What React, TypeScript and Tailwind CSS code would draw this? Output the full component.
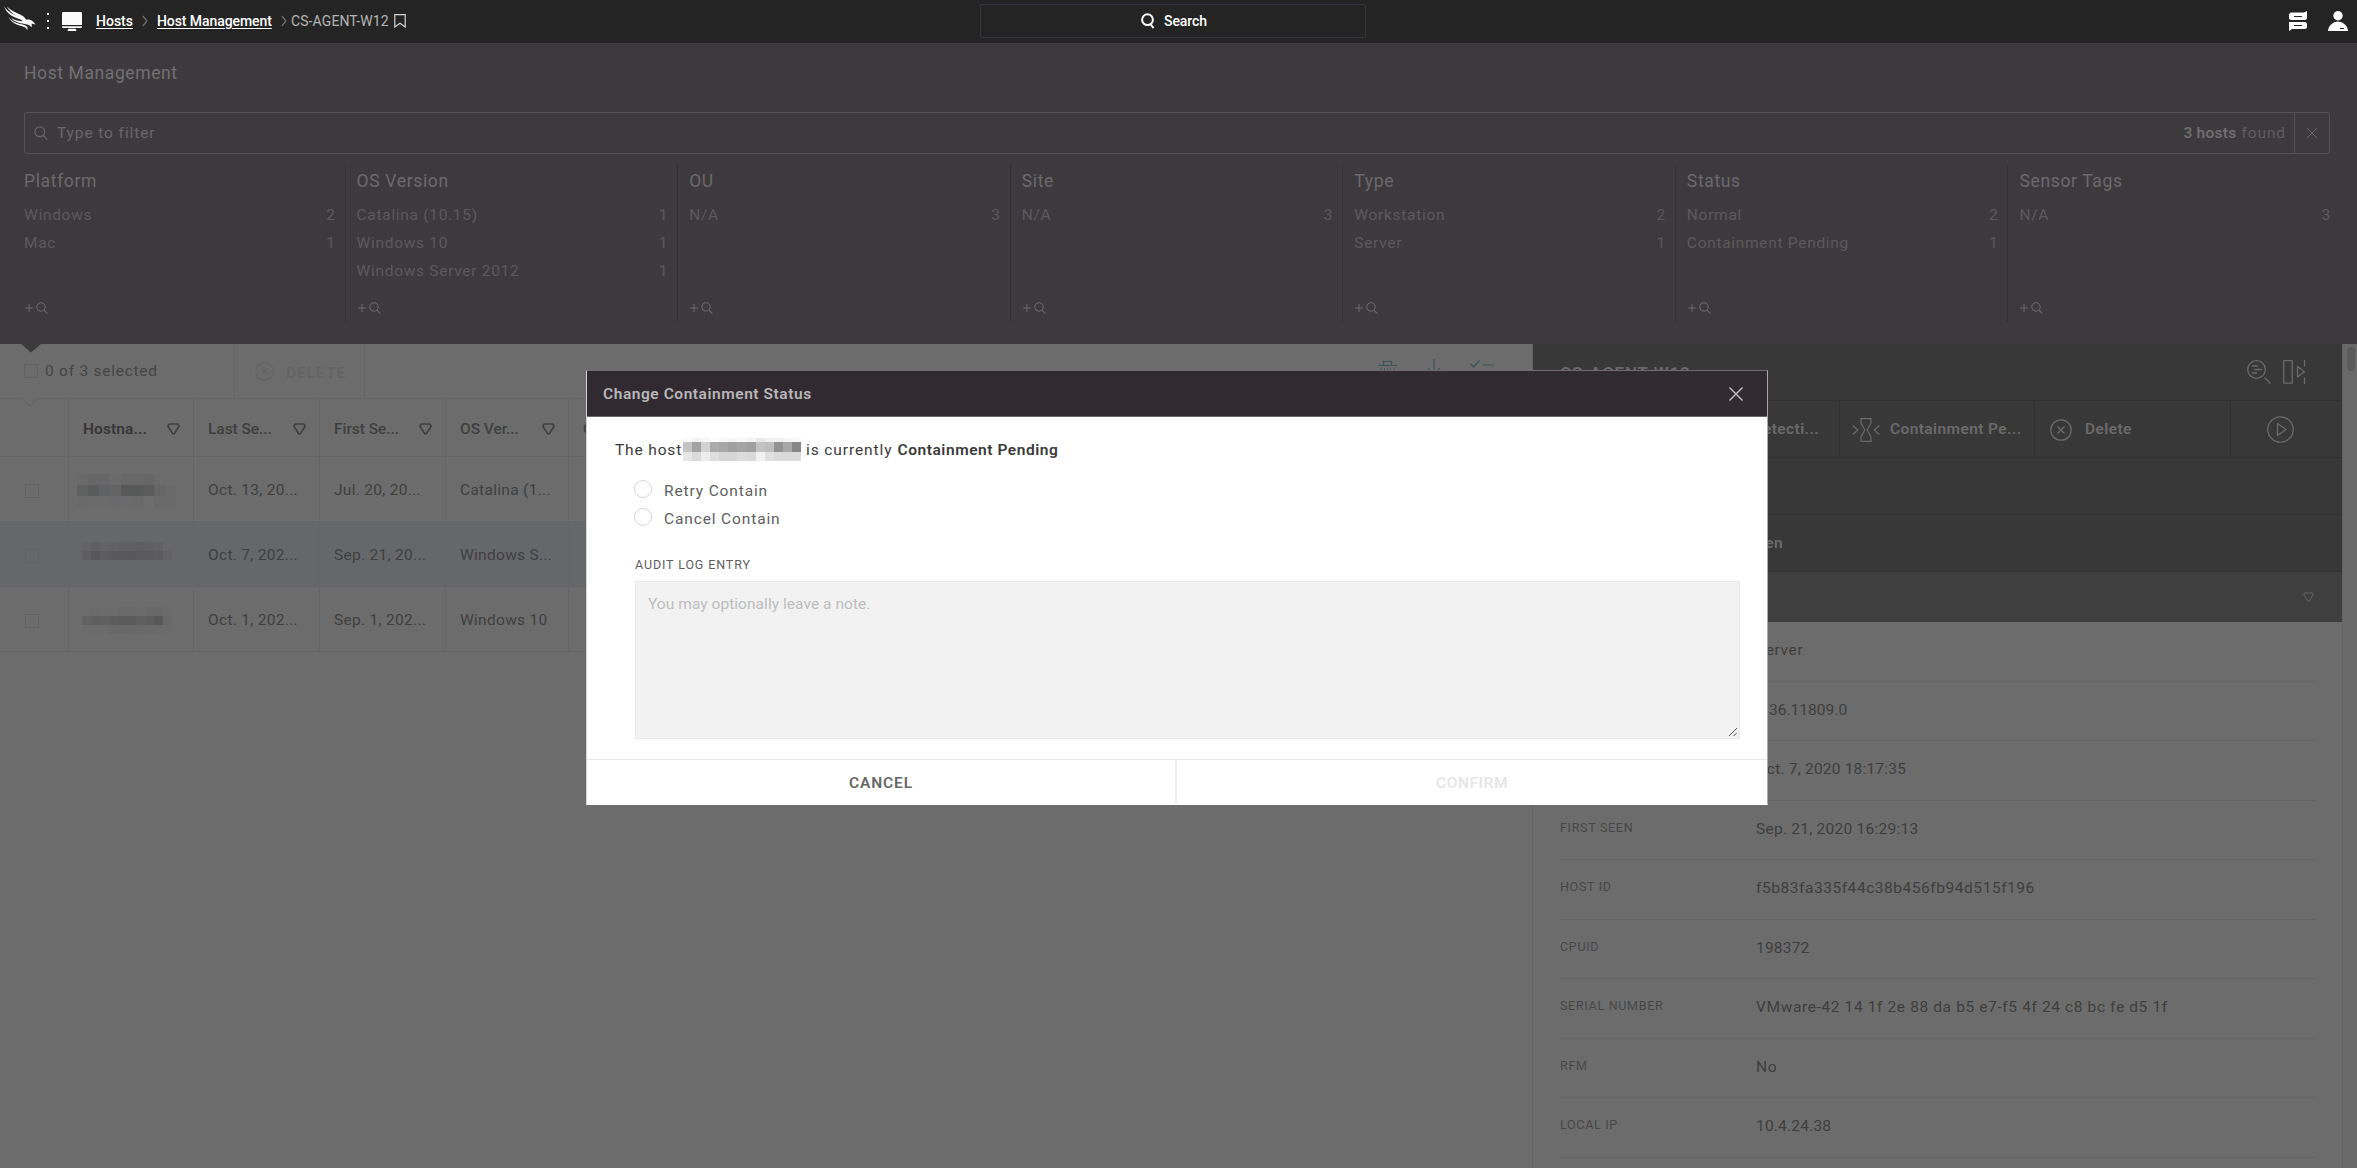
import type { ReactNode } from 'react';

type Facet = { title: string; rows: [string, number][] };

const facets: Facet[] = [
  { title: 'Platform', rows: [['Windows', 2], ['Mac', 1]] },
  { title: 'OS Version', rows: [['Catalina (10.15)', 1], ['Windows 10', 1], ['Windows Server 2012', 1]] },
  { title: 'OU', rows: [['N/A', 3]] },
  { title: 'Site', rows: [['N/A', 3]] },
  { title: 'Type', rows: [['Workstation', 2], ['Server', 1]] },
  { title: 'Status', rows: [['Normal', 2], ['Containment Pending', 1]] },
  { title: 'Sensor Tags', rows: [['N/A', 3]] },
];

const details: [string, string, string][] = [
  ['TYPE', 'Server', 'tracking-[0.6px]'],
  ['AGENT VERSION', '5.36.11809.0', 'tracking-[0.05px]'],
  ['LAST SEEN', 'Oct. 7, 2020 18:17:35', 'tracking-[0.2px]'],
  ['FIRST SEEN', 'Sep. 21, 2020 16:29:13', 'tracking-[0.25px]'],
  ['HOST ID', 'f5b83fa335f44c38b456fb94d515f196', 'tracking-[0.55px]'],
  ['CPUID', '198372', 'tracking-[0.2px]'],
  ['SERIAL NUMBER', 'VMware-42 14 1f 2e 88 da b5 e7-f5 4f 24 c8 bc fe d5 1f', 'tracking-[0.62px]'],
  ['RFM', 'No', 'tracking-[0.6px]'],
  ['LOCAL IP', '10.4.24.38', 'tracking-[0.2px]'],
];

function Magnifier({ className, width = 1.2 }: { className: string; width?: number }) {
  return (
    <svg viewBox="0 0 14 14" className={className} fill="none" stroke="currentColor" strokeWidth={width}>
      <circle cx="5.8" cy="5.8" r="4.9" />
      <path d="M9.2 9.4 13.3 13.6" />
    </svg>
  );
}

function Gem({ className }: { className: string }) {
  return (
    <svg viewBox="0 0 13 12" className={className} fill="none" stroke="currentColor" strokeWidth="1.6" strokeLinejoin="round">
      <path d="M2.200 1h8.600L12.100 3.200 7.200 10.800H5.800L.9 3.200z" />
    </svg>
  );
}

function Chevron() {
  return (
    <svg viewBox="0 0 6 12" className="h-3 w-1.5 text-[#6f6f6f]" fill="none" stroke="currentColor" strokeWidth="1.2">
      <path d="M.8 1 5 6 .8 11" />
    </svg>
  );
}

function CircleX({ className }: { className: string }) {
  return (
    <svg viewBox="0 0 22 22" className={className} fill="none" stroke="currentColor" strokeWidth="1.3">
      <circle cx="11" cy="11" r="10.2" />
      <path d="m7.5 7.5 7 7m0-7-7 7" />
    </svg>
  );
}

function TopBar() {
  return (
    <header className="grid h-[43px] grid-cols-[980px_386px_1fr] bg-[#242424] pb-px text-sm leading-[40px] text-white">
      <div className="flex items-center pl-1">
        <svg viewBox="0 0 32 25" className="-mt-1.5 h-[25px] w-8" fill="#fafafa">
          <path d="M0 0c2.600 4.600 7.500 7.500 12.500 9.700 3.500 1.500 5.800 2.700 7.200 4.600-4.600-1.300-9-2.500-12.500-4.900C3.200 6.700 1 3.600 0 0z" />
          <path d="M2.800 .4c4 4.200 9.600 6.200 14.200 8.500 2.600 1.300 4 2.700 5.200 4.900 2.300-.5 4.900 0 6.500 1.500.9.900 2.200 2.100 2.700 3.500-1.500-.9-2.900-1.200-4-.9.700 1 .6 2.200-.1 3.300-1.400-2.400-4.500-2.900-7.700-3.500C13.800 16.600 9.800 15.300 7 11.900c4 2.200 8.200 3.100 11.700 3.300C15 10.300 7.400 8.400 2.800.4z" />
          <path d="M4.300 11.100c2.600 3.200 6.500 5.700 11 6.700 3.400.8 6.800 1.200 8 3.200.5 1 .2 2.300-.2 3.200-.3-2-1.700-3-3.700-3.500-5-1.200-11.800-3.500-15.100-9.600z" />
        </svg>
        <div className="ml-[11px] flex flex-col gap-[5px]">
          <i className="size-0.5 bg-white" />
          <i className="size-0.5 bg-white" />
          <i className="size-0.5 bg-white" />
        </div>
        <svg viewBox="0 0 20 19" className="ml-[13px] h-[19px] w-5" fill="#fafafa">
          <path d="M1 0h18a1 1 0 0 1 1 1v12H0V1a1 1 0 0 1 1-1zM0 14.200h20v.8a1 1 0 0 1-1 1H1a1 1 0 0 1-1-1zM6.500 16.800h7l1.200 2.200H5.300z" />
        </svg>
        <a className="ml-3.5 w-[46px] font-medium underline underline-offset-2">Hosts</a>
        <Chevron />
        <a className="ml-[9px] w-[124px] font-medium tracking-[-0.08px] underline underline-offset-2">Host Management</a>
        <Chevron />
        <span className="ml-1 w-[103px] tracking-[0.1px] text-[#b5b5b5]">CS-AGENT-W12</span>
        <svg viewBox="0 0 12 14" className="h-3.5 w-3" fill="none" stroke="#d5d5d5" strokeWidth="1.2">
          <path d="M.8.7h10.400v12.300L6 9.300.8 13z" />
        </svg>
      </div>
      <div className="mt-1 flex h-[34px] items-center justify-center gap-[9px] rounded-[2px] border border-[#35343c] pl-0.5 font-medium">
        <svg viewBox="0 0 14 16" className="h-4 w-3.5" fill="none" stroke="#fff" strokeWidth="2">
          <circle cx="6.500" cy="6.700" r="5.400" />
          <path d="m9 10.500 3.600 4.600" />
        </svg>
        <span className="tracking-[-0.1px]">Search</span>
      </div>
      <div className="flex items-center justify-end gap-[21px] pr-[9px]">
        <svg viewBox="0 0 18 20" className="h-5 w-[18px]">
          <path fill="#fff" d="M2.500 1.500H15L18 0v6.500a2.500 2.500 0 0 1-2.500 2.500h-13A2.500 2.500 0 0 1 0 6.500V4a2.500 2.500 0 0 1 2.500-2.500zM0 11h15.500A2.500 2.500 0 0 1 18 13.500v2a2.500 2.500 0 0 1-2.500 2.500H3l-3 2z" />
          <path stroke="#242424" strokeWidth="1" d="M5 5.500h8M5 14.500h8" />
        </svg>
        <svg viewBox="0 0 20 20" className="size-5">
          <circle cx="10" cy="4.700" r="4.700" fill="#fff" />
          <path fill="#fff" d="M0 20c0-5 5-9.500 10-9.500S20 15 20 20z" />
          <path stroke="#242424" d="M12 17.500h4" />
        </svg>
      </div>
    </header>
  );
}

function FilterPanel() {
  return (
    <section className="h-[301px] bg-[#3d3a3e]">
      <h1 className="h-[69px] pl-6 text-[17.500px] leading-[61px] font-[450] tracking-[0.600px] text-[#717072]">Host Management</h1>
      <div className="mr-[27px] ml-6 flex h-[42px] items-center rounded-[3px] border border-[#545255] text-[15.500px] text-[#686669]">
        <Magnifier className="ml-[9px] size-3.5" />
        <span className="ml-[9px] pt-0.5 font-[450] tracking-[0.900px]">Type to filter</span>
        <span className="ml-auto pt-0.5 font-semibold tracking-[0.250px] text-[#6f6d70]">3 hosts</span>
        <span className="mr-[8px] ml-[5px] pt-0.5 font-[450] tracking-[0.900px] text-[#5e5c5f]">found</span>
        <div className="flex h-10 w-[35px] items-center justify-center border-l border-[#545255]">
          <svg viewBox="0 0 10 10" className="size-2.5" stroke="currentColor">
            <path d="m0 0 10 10M10 0 0 10" />
          </svg>
        </div>
      </div>
      <div className="mr-4 ml-[13px] grid grid-cols-7 pt-2.5">
        {facets.map((f) => (
          <div key={f.title} className="flex h-[158px] flex-col border-r border-[#353236] px-[11px] last:border-transparent">
            <h2 className="h-[37px] text-[17.500px] leading-[35px] font-[450] tracking-[0.650px] text-[#6b696c]">{f.title}</h2>
            {f.rows.map(([name, n]) => (
              <div key={name} className="flex h-7 justify-between text-[15.500px] leading-7 font-[450] tracking-[0.700px] text-[#5b595c]">
                <span>{name}</span>
                <span className="-mr-0.5">{n}</span>
              </div>
            ))}
            <div className="mt-auto mb-2 ml-px flex items-center gap-[3px] text-[#6b696c]">
              <svg viewBox="0 0 8 8" className="size-2" stroke="currentColor">
                <path d="M4 0v8M0 4h8" />
              </svg>
              <Magnifier className="size-3" />
            </div>
          </div>
        ))}
      </div>
    </section>
  );
}

// Redacted host names are drawn as a mosaic of flat tiles.
function Mosaic({ rows, tile }: { rows: string[][]; tile: string }) {
  return (
    <div>
      {rows.map((r, y) => (
        <div key={y} className="flex">
          {r.map((c, x) => (
            <i key={x} className={tile} style={{ backgroundColor: c }} />
          ))}
        </div>
      ))}
    </div>
  );
}

const hosts = [
  {
    shade: 'bg-[#6c6c6c]', pad: 'pl-2', tile: 'block h-[11px] w-[11px]', mosaic: [
      ['#6a6a6a', '#676767', '#676767', '#6b6b6b', '#686868', '#686868', '#676767', '#6b6b6b', '#6c6c6c'],
      ['#606060', '#5a5b5b', '#606164', '#646464', '#585858', '#585959', '#5c5c5c', '#666666', '#696969'],
      ['#6a6a6a', '#6b6b6b', '#6b6b6b', '#6a6a6d', '#6b6b6b', '#6a6a6a', '#6e6e6e', '#6a6a6a', '#6a6a6a'],
    ],
    cells: ['Oct. 13, 20...', 'Jul. 20, 20...', 'Catalina (1...'],
  },
  {
    shade: 'bg-[#66676b]', pad: 'pl-[13px]', tile: 'block h-[9px] w-[9px]', mosaic: [
      ['#636365', '#606063', '#646467', '#626265', '#606063', '#5f5f62', '#5e5e60', '#606063', '#626265', '#67676b'],
      ['#5e5e61', '#58585b', '#5d5d60', '#5a5a5d', '#59595b', '#58585a', '#5a5a5d', '#5b5b5d', '#5d5d60', '#636367'],
      ['#66676b', '#66676b', '#66676b', '#65666a', '#66676b', '#66676b', '#66676b', '#66676b', '#66676b', '#65666a'],
    ],
    cells: ['Oct. 7, 202...', 'Sep. 21, 20...', 'Windows S...'],
  },
  {
    shade: 'bg-[#6c6c6c]', pad: 'pl-[13px]', tile: 'block h-[9px] w-[9px]', mosaic: [
      ['#6c6c6c', '#6a6a6a', '#6b6b6b', '#6b6b6b', '#696969', '#696969', '#6b6b6b', '#696969', '#686868', '#6b6b6b'],
      ['#626262', '#5e5e5e', '#606060', '#5d5d5d', '#5b5b5b', '#5b5b5b', '#5f5f5f', '#5d5d5d', '#575757', '#686868'],
      ['#6b6b6b', '#6b6b6b', '#6b6b6b', '#686868', '#686868', '#696969', '#696969', '#6a6a6a', '#6a6a6a', '#6b6b6b'],
    ],
    cells: ['Oct. 1, 202...', 'Sep. 1, 202...', 'Windows 10'],
  },
];

const GRID = 'grid grid-cols-[69px_125px_126px_126px_123px_1fr]';

function HostTable() {
  return (
    <section className="relative w-[1532px] bg-[#6c6c6c] text-[15.500px] text-[#3f3f3f]">
      <svg viewBox="0 0 20 9" className="absolute top-0 left-[21px] h-[9px] w-5" fill="#3d3a3e">
        <path d="M0 0h20L10 8.500z" />
      </svg>
      <div className="flex h-[55px] border-b border-[#666] leading-[54px]">
        <div className="flex w-[235px] items-center border-r border-[#656565] pl-6">
          <i className="size-3.5 border border-[#626262]" />
          <span className="ml-[7px] font-[450] tracking-[0.750px] text-[#454545]">0 of 3 selected</span>
        </div>
        <div className="flex w-[130px] items-center border-r border-[#656565] pl-5 text-[#646464]">
          <CircleX className="size-[19px]" />
          <span className="ml-3 pt-1 font-semibold tracking-[0.950px]">DELETE</span>
        </div>
        <div className="ml-auto flex items-start gap-[29.500px] pt-[15px] pr-[38px] text-[#3c535b]">
          <svg viewBox="0 0 19 20" className="h-5 w-[19px]" fill="none" stroke="currentColor" strokeWidth="1.200">
            <path d="M5.500 6V2.500h8V6M0 6.500h19M3 9.500v10h13v-10M6.500 9.500v7M9.500 9.500v7M12.500 9.500v7" />
          </svg>
          <svg viewBox="0 0 14 24" className="h-6 w-3.5" fill="none" stroke="currentColor" strokeWidth="1.200">
            <path d="M7 0v16M1 9l6 6.500L13 9" />
          </svg>
          <svg viewBox="0 0 24 22" className="h-[22px] w-6" fill="none" stroke="currentColor" strokeWidth="1.200">
            <path d="m.5 4.500 3 3.500 6-6.500M13 6h11M.500 14.500l3 3.500 6-6.500M13 16h11" />
          </svg>
        </div>
      </div>
      <svg viewBox="0 0 16 9" className="absolute top-[54px] left-[22px] h-[9px] w-4" fill="#6c6c6c" stroke="#646464">
        <path d="m.5 0 7.500 8L15.500 0" />
      </svg>
      <div className={`${GRID} h-[58px] border-b border-[#656565] leading-[60px] font-medium`}>
        <div className="border-r border-[#656565]" />
        {['Hostna...', 'Last Se...', 'First Se...', 'OS Ver...'].map((h, i) => (
          <div key={h} className="flex items-center justify-between border-r border-[#656565] pr-[13px] pl-3.5">
            <span className={i === 0 ? 'font-semibold tracking-[0.100px] text-[#363636]' : 'tracking-[-0.050px]'}>{h}</span>
            <Gem className="h-3 w-[13px]" />
          </div>
        ))}
        <div className="pl-3.5">OU</div>
      </div>
      {hosts.map((h, i) => (
        <div key={i} className={`${GRID} ${h.shade} h-[65px] border-b border-[#656565] leading-[67px] font-[450] tracking-[0.300px]`}>
          <div className="flex items-center border-r border-[#656565] pl-[25px]">
            <i className="size-3.5 border border-[#626262]" />
          </div>
          <div className={`flex items-center border-r border-[#656565] ${h.pad}`}>
            <Mosaic rows={h.mosaic} tile={h.tile} />
          </div>
          {h.cells.map((c) => (
            <div key={c} className="border-r border-[#656565] pl-3.5">{c}</div>
          ))}
          <div />
        </div>
      ))}
    </section>
  );
}

function ActionCell({ icon, children }: { icon: ReactNode; children: ReactNode }) {
  return (
    <div className="flex items-center border-r border-[#313131]">
      <div className="flex w-[50px] shrink-0 justify-center pr-1 pl-1.5">{icon}</div>
      <span className="tracking-[0.400px] whitespace-nowrap">{children}</span>
    </div>
  );
}

function HostDetails() {
  return (
    <section className="w-[811px] overflow-hidden border-x border-[#646464] bg-[#6c6c6c] text-[15.500px]">
      <div className="-mx-px bg-[#383838] text-[#6a6a6a]">
        <div className="flex h-[57px] items-center border-b border-[#313131] pr-[37px] pl-7">
          <h2 className="pt-1 text-[17px] font-semibold tracking-[0.800px]">CS-AGENT-W12</h2>
          <svg viewBox="0 0 24 24" className="ml-auto size-6" fill="none" stroke="currentColor" strokeWidth="1.300">
            <circle cx="9.500" cy="9.500" r="8.800" />
            <path d="m17.500 17.500 6 6M5 6h6M7.500 9.500H15M5 13h5" />
          </svg>
          <svg viewBox="0 0 23 24" className="ml-3 h-6 w-[23px]" fill="none" stroke="currentColor" strokeWidth="1.300">
            <path d="M.7.7h8.500v22.500H.7zM21.500 0v6.500M21.500 17.500V24M14.500 6.500v10.500l6.800-5.200z" strokeLinejoin="round" />
          </svg>
        </div>
        <div className="grid h-[57px] grid-cols-[113px_195px_195px_196px_1fr] border-b border-[#313131] leading-[57px] font-semibold">
          <div className="border-r border-[#313131]" />
          <div className="border-r border-[#313131] pr-5 text-right tracking-[0.400px]">View Detecti...</div>
          <ActionCell
            icon={
              <svg viewBox="0 0 28 24" className="h-6 w-7 shrink-0" fill="none" stroke="currentColor" strokeWidth="1.200">
                <path d="m.7 7.500 5 4.500-5 4.500M27.300 7.500l-5 4.500 5 4.500M9 .7h10V5l-3.800 7 3.800 7v4.300H9V19l3.800-7L9 5z" />
              </svg>
            }
          >
            Containment Pe...
          </ActionCell>
          <ActionCell icon={<CircleX className="size-[22px]" />}>Delete</ActionCell>
          <div className="flex items-center justify-center pr-3.5">
            <svg viewBox="0 0 27 27" className="size-[27px]" fill="none" stroke="currentColor" strokeWidth="1.300">
              <circle cx="13.500" cy="13.500" r="12.700" />
              <path d="M10.500 7.500v12l8.500-6z" strokeLinejoin="round" />
            </svg>
          </div>
        </div>
        <div className="h-[57px] border-b border-[#313131]" />
        <div className="h-[57px] w-full border-b border-[#313131] leading-[57px] font-semibold">
          <div className="w-[251px] text-right tracking-[0.4px]">Last Seen</div>
        </div>
        <div className="flex h-[50px] items-center justify-end bg-[#3f3f3f] pr-[29px]">
          <Gem className="h-2.5 w-[11px] text-[#5a5a5a]" />
        </div>
      </div>
      <dl className="pr-[27px] pl-[27px]">
        {details.map(([k, v, spacing]) => (
          <div key={k} className="flex h-[59.5px] border-b border-[#656565]">
            <dt className="w-[196px] text-[12.500px] leading-[53px] tracking-[0.700px] text-[#474747]">{k}</dt>
            <dd className={`leading-[57px] font-[450] text-[#3e3e3e] ${spacing}`}>{v}</dd>
          </div>
        ))}
      </dl>
    </section>
  );
}

const redactedHost = [
  ['#fafafa', '#f3f3f3', '#f7f7f7', '#fdfdfd', '#f8f8f8', '#f6f6f6', '#f8f8f8', '#f4f4f4', '#e9e9e9', '#f1f1f1', '#f0f0f0', '#f6f6f6', '#f8f8f8'],
  ['#c4c4c4', '#a3a3a3', '#d2d2d2', '#aaaaaa', '#a6a6a6', '#a0a0a0', '#a4a4a4', '#a0a0a0', '#c2c2c2', '#bebebe', '#929292', '#a8a8a8', '#868686'],
  ['#e6e6e6', '#dadada', '#ededed', '#dedede', '#d6d6d6', '#d6d6d6', '#dcdcdc', '#d9d9d9', '#f2f2f2', '#e0e0e0', '#dadada', '#d9d9d9', '#dadada'],
];

function ContainmentDialog() {
  return (
    <div role="dialog" className="absolute top-[370px] left-[586px] flex h-[435px] w-[1182px] flex-col border border-t-[#6f6d6f] border-r-[#a9a9a9] border-b-white border-l-[#d4d4d4] bg-white text-[15.500px] text-[#3a3a3a]">
      <div className="flex h-[46px] items-center justify-between border-b border-[#6b666b] bg-[#312b31] pr-[24px] pl-4">
        <h3 className="pt-0.5 font-semibold tracking-[0.550px] text-[#b9b7b9]">Change Containment Status</h3>
        <svg viewBox="0 0 14 14" className="size-3.5" stroke="#c6c4c6" strokeWidth="1.400">
          <path d="m.5.500 13 13m0-13-13 13" />
        </svg>
      </div>
      <div className="flex-1 pt-[20px] pr-[27px] pl-7">
        <div className="flex h-[25px] items-center leading-6 whitespace-nowrap">
          <span className="w-[68px] font-[450] tracking-[0.850px]">The host</span>
          <div className="w-[123px]">
            {redactedHost.map((r, y) => (
              <div key={y} className="flex">
                {r.map((c, x) => (
                  <i key={x} className={y === 0 ? 'h-1 w-[9.080px]' : 'h-[9.500px] w-[9.080px]'} style={{ backgroundColor: c }} />
                ))}
              </div>
            ))}
          </div>
          <span className="w-[91.500px] font-[450] tracking-[0.900px]">is currently</span>
          <strong className="font-semibold tracking-[0.550px]">Containment Pending</strong>
        </div>
        <div className="mt-[15px] pl-[19px] font-[450] tracking-[0.870px] text-[#5e5e5e]">
          {['Retry Contain', 'Cancel Contain'].map((o) => (
            <label key={o} className="flex h-7 items-center gap-3">
              <i className="mb-1 size-[18px] rounded-full border border-[#d6d6d6]" />
              <span className="leading-[27px]">{o}</span>
            </label>
          ))}
        </div>
        <div className="ml-5 pt-[20px] text-[12.500px] leading-6 tracking-[0.880px] text-[#5e5e5e]">AUDIT LOG ENTRY</div>
        <div className="relative mt-[4px] ml-5 h-[158px] border border-[#e9e9e9] bg-[#f2f2f2] pt-[10px] pl-3 leading-6 font-[450] tracking-[0.050px] text-[#bdbdbd]">
          You may optionally leave a note.
          <svg viewBox="0 0 8 8" className="absolute right-0.5 bottom-0.5 size-2" stroke="#555" strokeWidth="1">
            <path d="m0 8 8-8M4.500 8 8 4.500" />
          </svg>
        </div>
      </div>
      <div className="grid h-[45px] grid-cols-2 border-t border-[#e9e9e9] text-center leading-[47px] font-semibold">
        <span className="h-11 border-r-2 border-[#f0f0f0] tracking-[0.850px] text-[#666]">CANCEL</span>
        <span className="h-11 tracking-[0.550px] text-[#e6e6e6]">CONFIRM</span>
      </div>
    </div>
  );
}

export default function App() {
  return (
    <div className="relative h-[1168px] w-[2357px] overflow-hidden bg-[#6c6c6c] font-[Roboto,sans-serif]">
      <TopBar />
      <FilterPanel />
      <main className="flex h-[824px]">
        <HostTable />
        <HostDetails />
        <div className="flex-1 bg-[#696969] pt-[3px] pl-1">
          <div className="h-6 w-2 rounded-full bg-[#5a5a5a]" />
        </div>
      </main>
      <ContainmentDialog />
    </div>
  );
}
